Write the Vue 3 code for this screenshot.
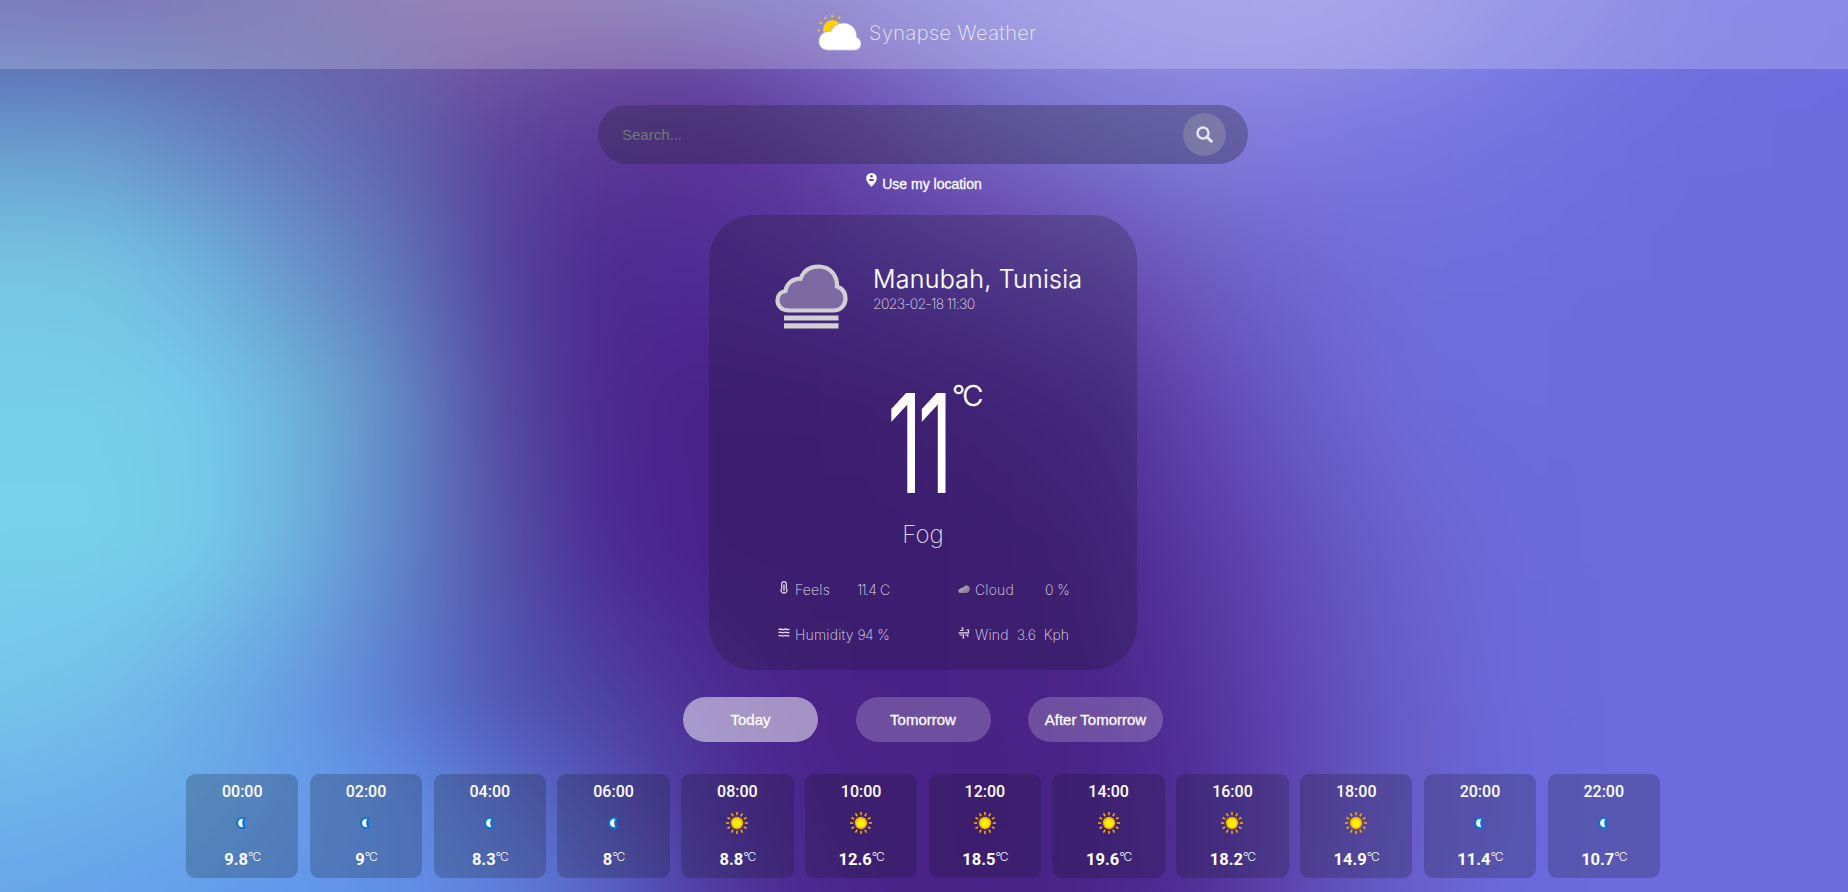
<script setup>
const bleed = 100
const stopsX = [0, 100, 200, 300, 400, 500, 600, 700, 800, 900, 1000, 1100, 1200, 1300, 1400, 1500, 1600, 1700, 1848]
const skyRows = [
  { y: 0, c: '5c5aaa 5b56a9 625ba7 6c61a9 7763ab 7e69a9 7a6ab0 7770b9 7b73c3 857ed3 8d88e0 918ee4 9391e5 9392e6 8f8ee4 8281e2 7a79e2 7170e1 6e6de1' },
  { y: 70, c: '5e77bb 6276b9 646fb3 6769af 6b5fa8 6b52a2 684a9d 6548a0 6f56b4 7868c4 817ad3 8785dd 8b88e1 8b88e3 8583e3 7b7be2 7473e1 6f6fe0 6d6ce0' },
  { y: 150, c: '6a9fce 6a9dce 6789c4 6576ba 6163ac 5b459c 5a3898 5a3297 603d9f 6a50b0 7463c1 7a71cd 807ad8 7d78dd 7775df 7373e0 6f6fe0 6d6ddf 6c6cdf' },
  { y: 264, c: '75c5e2 74c4e2 6eb3de 6993ca 6074b7 5444a0 4e2b91 502c94 54319a 5a3ba2 6042a8 664db1 6f5fc2 7269d0 706fdc 6e6ee0 6d6ddf 6c6cdf 6c6cdf' },
  { y: 400, c: '78cfea 78cfea 74caea 6db3d8 6389c4 564ba4 4d298f 4a2289 4a2289 4c248c 4f2a92 53309a 6049b0 6a5dc8 6e6bd9 6d6ddf 6c6cdf 6c6cdf 6c6cdf' },
  { y: 550, c: '78d0eb 78d0eb 74cbe8 6db1de 6184c9 5553aa 4d2d94 49218a 492188 492188 4a2289 4d278f 573aa3 6350b8 6a62cd 6c6adb 6c6cdf 6c6cdf 6c6cdf' },
  { y: 700, c: '75c5ea 72bfe9 6db0e6 6799e2 5d7ad0 5158b4 4d43a2 4d3094 4b2389 4a2288 4a2288 4b2489 53349b 5f48b3 685dc8 6b68da 6c6cdf 6c6cdf 6c6cdf' },
  { y: 800, c: '6db5ea 6bb0ea 69a9e9 659de9 6190e6 5b73d1 5456b8 4f369d 4b268c 4a2288 4a2287 4b258a 50309a 5c48b0 675cc8 6a67d9 6c6cdf 6c6cdf 6c6cdf' },
  { y: 892, c: '68a5ea 67a2ea 649dea 6296ea 618fe6 5f81dc 5966c6 5140a5 4c2a90 4a2288 4a2288 4b258a 513096 5e4ab2 675ec8 6a69dc 6c6cdf 6c6cdf 6c6cdf' },
]
const bands = skyRows.map((row, i) => {
  const list = row.c.split(' ').map((c, k) => `#${c} ${stopsX[k] + bleed}px`).join(',')
  const style = { backgroundImage: `linear-gradient(90deg,${list})` }
  if (i > 0) {
    const m = `linear-gradient(180deg, transparent ${skyRows[i - 1].y + bleed}px, #000 ${row.y + bleed}px)`
    style.maskImage = m
    style.webkitMaskImage = m
  }
  return style
})

const days = ['Today', 'Tomorrow', 'After Tomorrow']
const temps = [9.8, 9, 8.3, 8, 8.8, 12.6, 18.5, 19.6, 18.2, 14.9, 11.4, 10.7]
const hours = temps.map((temp, i) => ({
  time: String(i * 2).padStart(2, '0') + ':00',
  temp,
  day: i > 3 && i < 10,
}))
const rays = Array.from({ length: 12 }, (_, i) => i * 30)
</script>

<template>
  <div class="page">
    <div class="sky">
      <div v-for="(b, i) in bands" :key="i" class="band" :style="b"></div>
    </div>

    <header class="top">
      <svg class="logo" width="45" height="37" viewBox="0 0 45 37">
        <circle cx="15.500" cy="14.500" r="9.500" fill="#ffd000" />
        <g fill="#f2c521">
          <rect x="14.2" y="0" width="2" height="2.4" />
          <rect x="21" y="1.6" width="2" height="2.4" transform="rotate(28 22 3)" />
          <rect x="7.4" y="2" width="2" height="2.4" transform="rotate(-28 8 3)" />
          <rect x="2.6" y="7" width="2" height="2.4" transform="rotate(-60 3.6 8)" />
          <rect x="0.6" y="14.2" width="2.4" height="2" />
        </g>
        <path d="M11 35.200C5.500 35.200 1.800 31.200 1.800 26.200C1.800 20.200 7 15.600 13.800 16.300C16 11.400 20.500 8 26.500 8C34.500 8 40 14.500 39.800 22.300C42.400 23.300 44 25.500 44 28.500C44 32.500 41.500 35.200 37.500 35.200Z" fill="#fff" stroke="#a79fd4" stroke-width=".7" />
      </svg>
      <span class="brand">Synapse Weather</span>
    </header>

    <main class="main">
      <div class="search">
        <span class="placeholder">Search...</span>
        <button class="go">
          <svg width="17" height="17" viewBox="0 0 17 17" fill="none" stroke="#e6e4f0">
            <circle cx="7" cy="7" r="5.500" stroke-width="2.500" />
            <path d="M11.200 11.200L15.300 15.300" stroke-width="3" stroke-linecap="round" />
          </svg>
        </button>
      </div>

      <div class="locate">
        <svg width="11" height="14" viewBox="0 0 11 14">
          <path d="M5.500 0A5.300 5.300 0 0 0 .2 5.300C.2 9 5.500 14 5.500 14S10.800 9 10.800 5.300A5.300 5.300 0 0 0 5.500 0Z" fill="#fff" />
          <circle cx="5.500" cy="3.200" r="1.300" fill="#6340a5" />
          <path d="M2.800 7.200C3 5.600 8 5.600 8.200 7.200C7.500 8.400 3.500 8.400 2.800 7.200Z" fill="#6340a5" />
        </svg>
        <span>Use my location</span>
      </div>

      <section class="card">
        <div class="place">
          <svg class="fog" width="73" height="66" viewBox="0 0 73 66">
            <path d="M14 46.500C6 46.500 2.500 41.500 2.500 36.500C2.500 31 6 27.700 10.500 27C11.500 19.500 18 14.300 25.700 14.600C28.500 7 35 2.500 43.500 2.500C54.500 2.500 62.500 11 62 22.500C67.500 24.500 70.500 29 70.500 34.500C70.500 41.500 65.500 46.500 58.500 46.500Z" fill="#7f69a3" stroke="#d2d0d3" stroke-width="4.200" />
            <path d="M9 54H63.500M9 61.800H63.500" stroke="#d2d0d3" stroke-width="5.200" />
          </svg>
          <div class="names">
            <h1>Manubah, Tunisia</h1>
            <p>2023-02-18 11:30</p>
          </div>
        </div>

        <div class="now"><span class="deg">11</span><sup>°C</sup></div>
        <div class="cond">Fog</div>

        <div class="stats">
          <div class="stat">
            <svg width="12" height="13" viewBox="0 0 12 13" fill="none" stroke="#e3dded">
              <path d="M3.700 3A2.300 2.300 0 0 1 8.300 3V7.500A3 2.700 0 1 1 3.700 7.500Z" stroke-width="1.200" />
              <path d="M6 3.500V10" stroke-width="1.300" />
            </svg>
            <span class="k feels">Feels</span><span class="v v1">11.4 C</span>
          </div>
          <div class="stat">
            <svg width="12" height="13" viewBox="0 0 12 13">
              <defs>
                <linearGradient id="cl" x1="0" y1="0" x2="1" y2="1">
                  <stop offset="0" stop-color="#c5bfca" /><stop offset="1" stop-color="#74677f" />
                </linearGradient>
              </defs>
              <path d="M2.500 12C-.5 12-.5 8 2.500 7.800C3.300 6.300 4.700 6.300 5.500 6.800C6.500 3.500 11.700 3.800 11.800 8C11.800 10.500 10 12 8 12Z" fill="url(#cl)" />
            </svg>
            <span class="k">Cloud</span><span class="v">0 %</span>
          </div>
          <div class="stat">
            <svg width="12" height="13" viewBox="0 0 12 13" fill="none" stroke="#e3dded" stroke-width="1.300">
              <path d="M.5 3.500L2.500 3L5 3.700L7.500 3L9.500 3.700L11.500 3.200M.5 6.700L2.500 6.200L5 6.900L7.500 6.200L9.500 6.900L11.500 6.400M.5 9.900L2.500 9.400L5 10.100L7.500 9.400L9.500 10.100L11.500 9.600" />
            </svg>
            <span class="k">Humidity</span><span class="v">94 %</span>
          </div>
          <div class="stat">
            <svg width="12" height="13" viewBox="0 0 12 13" fill="none" stroke="#e3dded" stroke-width="1.200">
              <path d="M2 4.500H4.800V2H3.500M.5 6.800H10.500V4H8.500M1.500 9H5.500V11.800H4.300M7.200 9H9.800V10.800" />
            </svg>
            <span class="k">Wind</span><span class="v mid">3.6</span><span class="v unit">Kph</span>
          </div>
        </div>
      </section>

      <nav class="days">
        <button v-for="(d, i) in days" :key="d" class="day" :class="{ active: i === 0 }">{{ d }}</button>
      </nav>

      <section class="hours">
        <article v-for="h in hours" :key="h.time" class="hour">
          <div class="time">{{ h.time }}</div>
          <svg v-if="h.day" width="24" height="24" viewBox="-12 -12 24 24">
            <g fill="#eea80e">
              <rect v-for="r in rays" :key="r" x="-.8" y="-11" width="1.600" height="3.200" :transform="`rotate(${r})`" />
            </g>
            <circle r="6.200" fill="#fba504" />
            <circle r="4.600" fill="#fff000" />
          </svg>
          <svg v-else width="24" height="24" viewBox="0 0 24 24">
            <path d="M16.200 7C14 9.500 14 14.500 16.200 17C14 18.200 11 18.600 9 17.200C5 14.500 5 9.500 9 6.800C11 5.400 14 5.800 16.200 7Z" fill="#0b72d2" />
            <path d="M13.300 7.800C11.800 10.400 11.800 13.600 13.300 16.200C6.300 17 6.300 7 13.300 7.800Z" fill="#f4fbff" />
          </svg>
          <div class="temp">{{ h.temp }}<sup>°C</sup></div>
        </article>
      </section>
    </main>
  </div>
</template>

<style>
html, body { margin: 0; overflow: hidden; background: #4a2288; }
</style>

<style scoped>
* { box-sizing: border-box; }
.page { position: relative; width: 1848px; height: 892px; overflow: hidden; color: #fff; font-family: Roboto, "Liberation Sans", sans-serif; }
.sky { position: absolute; inset: -100px; filter: blur(30px); }
.band { position: absolute; inset: 0; }
button { border: 0; color: inherit; font: inherit; padding: 0; }
.top { position: relative; height: 69px; padding: 15px 0 0 817px; display: flex; align-items: flex-start; background: rgba(255, 255, 255, .2); }
.brand { margin: 5px 0 0 7px; font: 200 20px/26px Inter, sans-serif; letter-spacing: .45px; color: rgba(255, 255, 255, .85); white-space: nowrap; }
.main { position: relative; display: flex; flex-direction: column; align-items: center; padding: 36px 2px 0 0; }
.search { width: 650px; height: 59px; border-radius: 30px; background: rgba(42, 37, 58, .34); display: flex; align-items: center; justify-content: space-between; padding: 0 22px 0 24px; }
.placeholder { font: 15px/20px "Liberation Sans", sans-serif; color: #757575; }
.go { width: 43px; height: 43px; border-radius: 50%; background: rgba(150, 145, 170, .5); display: grid; place-items: center; }
.locate { margin: 9px 0 0 2px; height: 22px; display: flex; align-items: flex-start; gap: 5px; font: 14px/22px "Liberation Sans", sans-serif; -webkit-text-stroke: .3px #fff; }
.locate span { white-space: nowrap; }
.card { margin-top: 20px; width: 428px; height: 455px; border-radius: 45px; background: rgba(18, 20, 24, .22); display: flex; flex-direction: column; }
.place { display: flex; padding: 49px 0 0 66px; height: 130px; }
.names { margin: 0 0 0 25px; }
.names h1 { margin: 0; font: 300 25px/30px Inter, sans-serif; letter-spacing: .25px; white-space: nowrap; -webkit-text-stroke: .2px #fff; }
.names p { margin: 1px 0 0; font: 200 14px/18px Inter, sans-serif; letter-spacing: -.7px; color: rgba(255, 255, 255, .85); white-space: nowrap; }
.now { height: 172px; padding-left: 178px; display: flex; align-items: flex-start; }
.deg { font: 300 135px/137px Inter, sans-serif; letter-spacing: -8.200px; margin-top: 30px; width: 65px; white-space: nowrap; transform: scaleX(.68); transform-origin: left; -webkit-text-stroke: 2px #fff; }
.now sup { font: 300 29px/31px Inter, sans-serif; margin-top: 35px; letter-spacing: -2.500px; -webkit-text-stroke: .4px #fff; }
.cond { height: 34px; padding-top: 1px; text-align: center; font: 200 24px/34px Inter, sans-serif; color: rgba(255, 255, 255, .85); }
.stats { margin: 28px 68px 0 69px; display: grid; grid-template-columns: 111px 111px; justify-content: space-between; row-gap: 23px; }
.stat { height: 22px; display: flex; align-items: flex-start; font: 200 14px/22px Inter, sans-serif; color: rgba(255, 255, 255, .85); white-space: nowrap; }
.stat svg { margin: 2px 5px 0 0; flex: none; }
.stat .k { letter-spacing: .2px; }
.stat .v { margin-left: auto; letter-spacing: -.8px; word-spacing: 1.500px; }
.stat .v1 { letter-spacing: -1.100px; }
.stat .v.mid { margin-left: 8px; letter-spacing: -.2px; }
.stat .v.unit { letter-spacing: 0; }
.days { margin-top: 27px; display: flex; gap: 37.500px; }
.day { width: 135px; height: 45px; border-radius: 23px; background: rgba(255, 255, 255, .2); font-family: "Liberation Sans", sans-serif; font-size: 15px; -webkit-text-stroke: .3px #fff; }
.day.active { background: rgba(255, 255, 255, .5); }
.hours { margin-top: 32px; width: 1474px; display: grid; grid-template-columns: repeat(12, 1fr); column-gap: 11.300px; }
.hour { height: 104px; border-radius: 9px; background: rgba(18, 20, 24, .22); display: flex; flex-direction: column; align-items: center; }
.time { margin-top: 8px; font-size: 16px; line-height: 19px; font-weight: 500; }
.hour svg { margin-top: 10px; }
.temp { display: flex; margin-top: 15px; font-size: 16.500px; line-height: 19px; font-weight: 700; }
.temp sup { font: 300 12px/14px Inter, sans-serif; letter-spacing: -1px; }
</style>
